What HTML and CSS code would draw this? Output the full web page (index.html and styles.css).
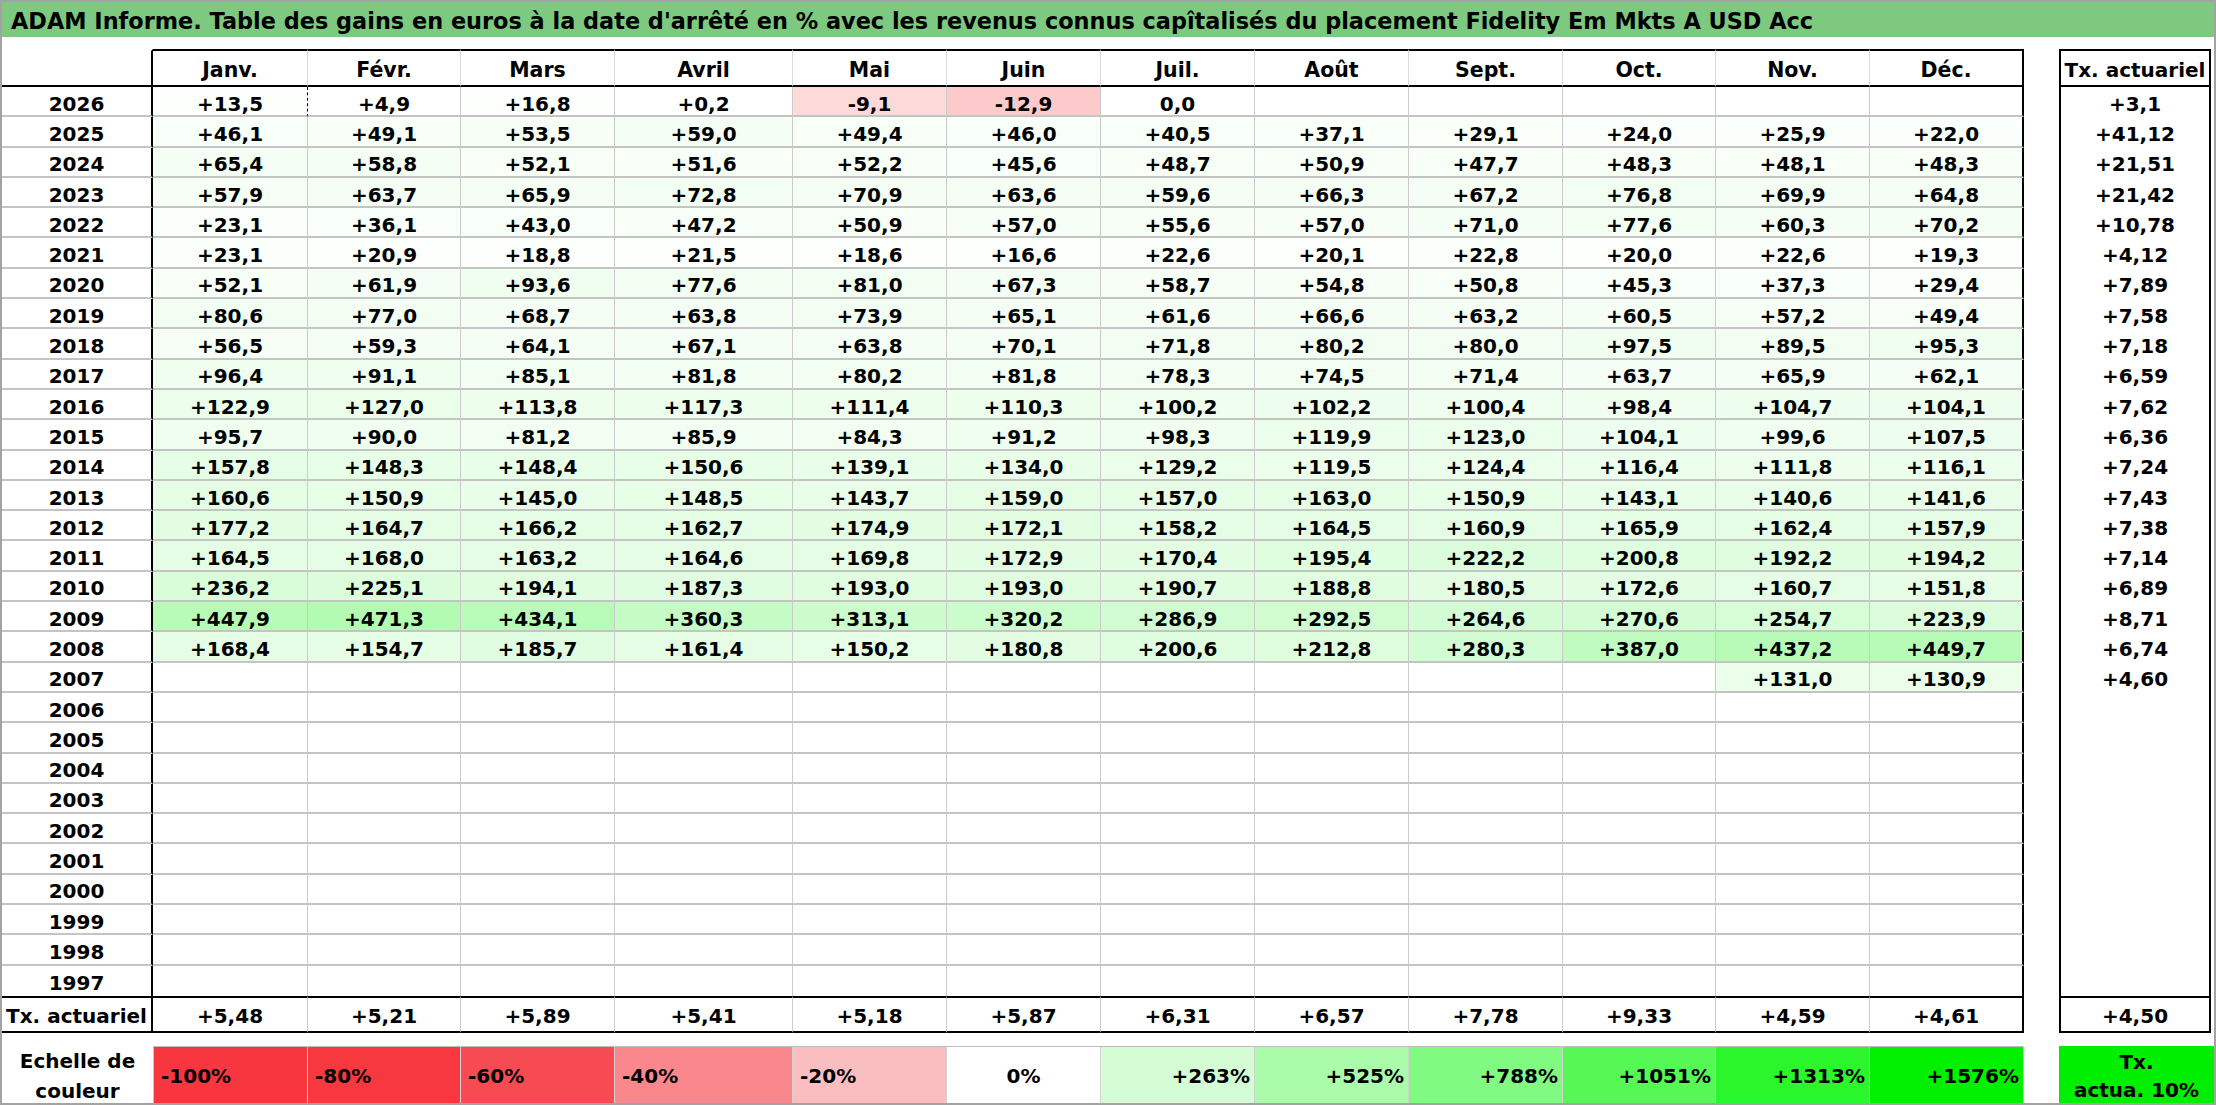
FILE: index.html
```html
<!DOCTYPE html>
<html lang="fr">
<head>
<meta charset="utf-8">
<title>ADAM Informe</title>
<link rel="stylesheet" href="styles.css">
</head>
<body>
<div class="sheet">
  <div class="title">ADAM Informe. Table des gains en euros à la date d'arrêté en % avec les revenus connus capîtalisés du placement Fidelity Em Mkts A USD Acc</div>
  <div class="layout">
    <div class="tbl">
      <div class="row head"><div></div><div>Janv.</div><div>Févr.</div><div>Mars</div><div>Avril</div><div>Mai</div><div>Juin</div><div>Juil.</div><div>Août</div><div>Sept.</div><div>Oct.</div><div>Nov.</div><div>Déc.</div></div>
      <div class="rows">
        <div class="row data"><div>2026</div><div class="c dash" style="--v:13.5">+13,5</div><div class="c" style="--v:4.9">+4,9</div><div class="c" style="--v:16.8">+16,8</div><div class="c" style="--v:0.2">+0,2</div><div class="c n1">-9,1</div><div class="c n2">-12,9</div><div class="c">0,0</div><div class="c"></div><div class="c"></div><div class="c"></div><div class="c"></div><div class="c"></div></div>
        <div class="row data"><div>2025</div><div class="c" style="--v:46.1">+46,1</div><div class="c" style="--v:49.1">+49,1</div><div class="c" style="--v:53.5">+53,5</div><div class="c" style="--v:59">+59,0</div><div class="c" style="--v:49.4">+49,4</div><div class="c" style="--v:46">+46,0</div><div class="c" style="--v:40.5">+40,5</div><div class="c" style="--v:37.1">+37,1</div><div class="c" style="--v:29.1">+29,1</div><div class="c" style="--v:24">+24,0</div><div class="c" style="--v:25.9">+25,9</div><div class="c" style="--v:22">+22,0</div></div>
        <div class="row data"><div>2024</div><div class="c" style="--v:65.4">+65,4</div><div class="c" style="--v:58.8">+58,8</div><div class="c" style="--v:52.1">+52,1</div><div class="c" style="--v:51.6">+51,6</div><div class="c" style="--v:52.2">+52,2</div><div class="c" style="--v:45.6">+45,6</div><div class="c" style="--v:48.7">+48,7</div><div class="c" style="--v:50.9">+50,9</div><div class="c" style="--v:47.7">+47,7</div><div class="c" style="--v:48.3">+48,3</div><div class="c" style="--v:48.1">+48,1</div><div class="c" style="--v:48.3">+48,3</div></div>
        <div class="row data"><div>2023</div><div class="c" style="--v:57.9">+57,9</div><div class="c" style="--v:63.7">+63,7</div><div class="c" style="--v:65.9">+65,9</div><div class="c" style="--v:72.8">+72,8</div><div class="c" style="--v:70.9">+70,9</div><div class="c" style="--v:63.6">+63,6</div><div class="c" style="--v:59.6">+59,6</div><div class="c" style="--v:66.3">+66,3</div><div class="c" style="--v:67.2">+67,2</div><div class="c" style="--v:76.8">+76,8</div><div class="c" style="--v:69.9">+69,9</div><div class="c" style="--v:64.8">+64,8</div></div>
        <div class="row data"><div>2022</div><div class="c" style="--v:23.1">+23,1</div><div class="c" style="--v:36.1">+36,1</div><div class="c" style="--v:43">+43,0</div><div class="c" style="--v:47.2">+47,2</div><div class="c" style="--v:50.9">+50,9</div><div class="c" style="--v:57">+57,0</div><div class="c" style="--v:55.6">+55,6</div><div class="c" style="--v:57">+57,0</div><div class="c" style="--v:71">+71,0</div><div class="c" style="--v:77.6">+77,6</div><div class="c" style="--v:60.3">+60,3</div><div class="c" style="--v:70.2">+70,2</div></div>
        <div class="row data"><div>2021</div><div class="c" style="--v:23.1">+23,1</div><div class="c" style="--v:20.9">+20,9</div><div class="c" style="--v:18.8">+18,8</div><div class="c" style="--v:21.5">+21,5</div><div class="c" style="--v:18.6">+18,6</div><div class="c" style="--v:16.6">+16,6</div><div class="c" style="--v:22.6">+22,6</div><div class="c" style="--v:20.1">+20,1</div><div class="c" style="--v:22.8">+22,8</div><div class="c" style="--v:20">+20,0</div><div class="c" style="--v:22.6">+22,6</div><div class="c" style="--v:19.3">+19,3</div></div>
        <div class="row data"><div>2020</div><div class="c" style="--v:52.1">+52,1</div><div class="c" style="--v:61.9">+61,9</div><div class="c" style="--v:93.6">+93,6</div><div class="c" style="--v:77.6">+77,6</div><div class="c" style="--v:81">+81,0</div><div class="c" style="--v:67.3">+67,3</div><div class="c" style="--v:58.7">+58,7</div><div class="c" style="--v:54.8">+54,8</div><div class="c" style="--v:50.8">+50,8</div><div class="c" style="--v:45.3">+45,3</div><div class="c" style="--v:37.3">+37,3</div><div class="c" style="--v:29.4">+29,4</div></div>
        <div class="row data"><div>2019</div><div class="c" style="--v:80.6">+80,6</div><div class="c" style="--v:77">+77,0</div><div class="c" style="--v:68.7">+68,7</div><div class="c" style="--v:63.8">+63,8</div><div class="c" style="--v:73.9">+73,9</div><div class="c" style="--v:65.1">+65,1</div><div class="c" style="--v:61.6">+61,6</div><div class="c" style="--v:66.6">+66,6</div><div class="c" style="--v:63.2">+63,2</div><div class="c" style="--v:60.5">+60,5</div><div class="c" style="--v:57.2">+57,2</div><div class="c" style="--v:49.4">+49,4</div></div>
        <div class="row data"><div>2018</div><div class="c" style="--v:56.5">+56,5</div><div class="c" style="--v:59.3">+59,3</div><div class="c" style="--v:64.1">+64,1</div><div class="c" style="--v:67.1">+67,1</div><div class="c" style="--v:63.8">+63,8</div><div class="c" style="--v:70.1">+70,1</div><div class="c" style="--v:71.8">+71,8</div><div class="c" style="--v:80.2">+80,2</div><div class="c" style="--v:80">+80,0</div><div class="c" style="--v:97.5">+97,5</div><div class="c" style="--v:89.5">+89,5</div><div class="c" style="--v:95.3">+95,3</div></div>
        <div class="row data"><div>2017</div><div class="c" style="--v:96.4">+96,4</div><div class="c" style="--v:91.1">+91,1</div><div class="c" style="--v:85.1">+85,1</div><div class="c" style="--v:81.8">+81,8</div><div class="c" style="--v:80.2">+80,2</div><div class="c" style="--v:81.8">+81,8</div><div class="c" style="--v:78.3">+78,3</div><div class="c" style="--v:74.5">+74,5</div><div class="c" style="--v:71.4">+71,4</div><div class="c" style="--v:63.7">+63,7</div><div class="c" style="--v:65.9">+65,9</div><div class="c" style="--v:62.1">+62,1</div></div>
        <div class="row data"><div>2016</div><div class="c" style="--v:122.9">+122,9</div><div class="c" style="--v:127">+127,0</div><div class="c" style="--v:113.8">+113,8</div><div class="c" style="--v:117.3">+117,3</div><div class="c" style="--v:111.4">+111,4</div><div class="c" style="--v:110.3">+110,3</div><div class="c" style="--v:100.2">+100,2</div><div class="c" style="--v:102.2">+102,2</div><div class="c" style="--v:100.4">+100,4</div><div class="c" style="--v:98.4">+98,4</div><div class="c" style="--v:104.7">+104,7</div><div class="c" style="--v:104.1">+104,1</div></div>
        <div class="row data"><div>2015</div><div class="c" style="--v:95.7">+95,7</div><div class="c" style="--v:90">+90,0</div><div class="c" style="--v:81.2">+81,2</div><div class="c" style="--v:85.9">+85,9</div><div class="c" style="--v:84.3">+84,3</div><div class="c" style="--v:91.2">+91,2</div><div class="c" style="--v:98.3">+98,3</div><div class="c" style="--v:119.9">+119,9</div><div class="c" style="--v:123">+123,0</div><div class="c" style="--v:104.1">+104,1</div><div class="c" style="--v:99.6">+99,6</div><div class="c" style="--v:107.5">+107,5</div></div>
        <div class="row data"><div>2014</div><div class="c" style="--v:157.8">+157,8</div><div class="c" style="--v:148.3">+148,3</div><div class="c" style="--v:148.4">+148,4</div><div class="c" style="--v:150.6">+150,6</div><div class="c" style="--v:139.1">+139,1</div><div class="c" style="--v:134">+134,0</div><div class="c" style="--v:129.2">+129,2</div><div class="c" style="--v:119.5">+119,5</div><div class="c" style="--v:124.4">+124,4</div><div class="c" style="--v:116.4">+116,4</div><div class="c" style="--v:111.8">+111,8</div><div class="c" style="--v:116.1">+116,1</div></div>
        <div class="row data"><div>2013</div><div class="c" style="--v:160.6">+160,6</div><div class="c" style="--v:150.9">+150,9</div><div class="c" style="--v:145">+145,0</div><div class="c" style="--v:148.5">+148,5</div><div class="c" style="--v:143.7">+143,7</div><div class="c" style="--v:159">+159,0</div><div class="c" style="--v:157">+157,0</div><div class="c" style="--v:163">+163,0</div><div class="c" style="--v:150.9">+150,9</div><div class="c" style="--v:143.1">+143,1</div><div class="c" style="--v:140.6">+140,6</div><div class="c" style="--v:141.6">+141,6</div></div>
        <div class="row data"><div>2012</div><div class="c" style="--v:177.2">+177,2</div><div class="c" style="--v:164.7">+164,7</div><div class="c" style="--v:166.2">+166,2</div><div class="c" style="--v:162.7">+162,7</div><div class="c" style="--v:174.9">+174,9</div><div class="c" style="--v:172.1">+172,1</div><div class="c" style="--v:158.2">+158,2</div><div class="c" style="--v:164.5">+164,5</div><div class="c" style="--v:160.9">+160,9</div><div class="c" style="--v:165.9">+165,9</div><div class="c" style="--v:162.4">+162,4</div><div class="c" style="--v:157.9">+157,9</div></div>
        <div class="row data"><div>2011</div><div class="c" style="--v:164.5">+164,5</div><div class="c" style="--v:168">+168,0</div><div class="c" style="--v:163.2">+163,2</div><div class="c" style="--v:164.6">+164,6</div><div class="c" style="--v:169.8">+169,8</div><div class="c" style="--v:172.9">+172,9</div><div class="c" style="--v:170.4">+170,4</div><div class="c" style="--v:195.4">+195,4</div><div class="c" style="--v:222.2">+222,2</div><div class="c" style="--v:200.8">+200,8</div><div class="c" style="--v:192.2">+192,2</div><div class="c" style="--v:194.2">+194,2</div></div>
        <div class="row data"><div>2010</div><div class="c" style="--v:236.2">+236,2</div><div class="c" style="--v:225.1">+225,1</div><div class="c" style="--v:194.1">+194,1</div><div class="c" style="--v:187.3">+187,3</div><div class="c" style="--v:193">+193,0</div><div class="c" style="--v:193">+193,0</div><div class="c" style="--v:190.7">+190,7</div><div class="c" style="--v:188.8">+188,8</div><div class="c" style="--v:180.5">+180,5</div><div class="c" style="--v:172.6">+172,6</div><div class="c" style="--v:160.7">+160,7</div><div class="c" style="--v:151.8">+151,8</div></div>
        <div class="row data"><div>2009</div><div class="c" style="--v:447.9">+447,9</div><div class="c" style="--v:471.3">+471,3</div><div class="c" style="--v:434.1">+434,1</div><div class="c" style="--v:360.3">+360,3</div><div class="c" style="--v:313.1">+313,1</div><div class="c" style="--v:320.2">+320,2</div><div class="c" style="--v:286.9">+286,9</div><div class="c" style="--v:292.5">+292,5</div><div class="c" style="--v:264.6">+264,6</div><div class="c" style="--v:270.6">+270,6</div><div class="c" style="--v:254.7">+254,7</div><div class="c" style="--v:223.9">+223,9</div></div>
        <div class="row data"><div>2008</div><div class="c" style="--v:168.4">+168,4</div><div class="c" style="--v:154.7">+154,7</div><div class="c" style="--v:185.7">+185,7</div><div class="c" style="--v:161.4">+161,4</div><div class="c" style="--v:150.2">+150,2</div><div class="c" style="--v:180.8">+180,8</div><div class="c" style="--v:200.6">+200,6</div><div class="c" style="--v:212.8">+212,8</div><div class="c" style="--v:280.3">+280,3</div><div class="c" style="--v:387">+387,0</div><div class="c" style="--v:437.2">+437,2</div><div class="c" style="--v:449.7">+449,7</div></div>
        <div class="row data"><div>2007</div><div class="c"></div><div class="c"></div><div class="c"></div><div class="c"></div><div class="c"></div><div class="c"></div><div class="c"></div><div class="c"></div><div class="c"></div><div class="c"></div><div class="c" style="--v:131">+131,0</div><div class="c" style="--v:130.9">+130,9</div></div>
        <div class="row data"><div>2006</div><div class="c"></div><div class="c"></div><div class="c"></div><div class="c"></div><div class="c"></div><div class="c"></div><div class="c"></div><div class="c"></div><div class="c"></div><div class="c"></div><div class="c"></div><div class="c"></div></div>
        <div class="row data"><div>2005</div><div class="c"></div><div class="c"></div><div class="c"></div><div class="c"></div><div class="c"></div><div class="c"></div><div class="c"></div><div class="c"></div><div class="c"></div><div class="c"></div><div class="c"></div><div class="c"></div></div>
        <div class="row data"><div>2004</div><div class="c"></div><div class="c"></div><div class="c"></div><div class="c"></div><div class="c"></div><div class="c"></div><div class="c"></div><div class="c"></div><div class="c"></div><div class="c"></div><div class="c"></div><div class="c"></div></div>
        <div class="row data"><div>2003</div><div class="c"></div><div class="c"></div><div class="c"></div><div class="c"></div><div class="c"></div><div class="c"></div><div class="c"></div><div class="c"></div><div class="c"></div><div class="c"></div><div class="c"></div><div class="c"></div></div>
        <div class="row data"><div>2002</div><div class="c"></div><div class="c"></div><div class="c"></div><div class="c"></div><div class="c"></div><div class="c"></div><div class="c"></div><div class="c"></div><div class="c"></div><div class="c"></div><div class="c"></div><div class="c"></div></div>
        <div class="row data"><div>2001</div><div class="c"></div><div class="c"></div><div class="c"></div><div class="c"></div><div class="c"></div><div class="c"></div><div class="c"></div><div class="c"></div><div class="c"></div><div class="c"></div><div class="c"></div><div class="c"></div></div>
        <div class="row data"><div>2000</div><div class="c"></div><div class="c"></div><div class="c"></div><div class="c"></div><div class="c"></div><div class="c"></div><div class="c"></div><div class="c"></div><div class="c"></div><div class="c"></div><div class="c"></div><div class="c"></div></div>
        <div class="row data"><div>1999</div><div class="c"></div><div class="c"></div><div class="c"></div><div class="c"></div><div class="c"></div><div class="c"></div><div class="c"></div><div class="c"></div><div class="c"></div><div class="c"></div><div class="c"></div><div class="c"></div></div>
        <div class="row data"><div>1998</div><div class="c"></div><div class="c"></div><div class="c"></div><div class="c"></div><div class="c"></div><div class="c"></div><div class="c"></div><div class="c"></div><div class="c"></div><div class="c"></div><div class="c"></div><div class="c"></div></div>
        <div class="row data"><div>1997</div><div class="c"></div><div class="c"></div><div class="c"></div><div class="c"></div><div class="c"></div><div class="c"></div><div class="c"></div><div class="c"></div><div class="c"></div><div class="c"></div><div class="c"></div><div class="c"></div></div>
      </div>
      <div class="row foot"><div>Tx. actuariel</div><div>+5,48</div><div>+5,21</div><div>+5,89</div><div>+5,41</div><div>+5,18</div><div>+5,87</div><div>+6,31</div><div>+6,57</div><div>+7,78</div><div>+9,33</div><div>+4,59</div><div>+4,61</div></div>
    </div>
    <div class="side">
      <div class="sh">Tx. actuariel</div>
      <div class="sv">+3,1</div>
      <div class="sv">+41,12</div>
      <div class="sv">+21,51</div>
      <div class="sv">+21,42</div>
      <div class="sv">+10,78</div>
      <div class="sv">+4,12</div>
      <div class="sv">+7,89</div>
      <div class="sv">+7,58</div>
      <div class="sv">+7,18</div>
      <div class="sv">+6,59</div>
      <div class="sv">+7,62</div>
      <div class="sv">+6,36</div>
      <div class="sv">+7,24</div>
      <div class="sv">+7,43</div>
      <div class="sv">+7,38</div>
      <div class="sv">+7,14</div>
      <div class="sv">+6,89</div>
      <div class="sv">+8,71</div>
      <div class="sv">+6,74</div>
      <div class="sv">+4,60</div>
      <div class="sv"></div>
      <div class="sv"></div>
      <div class="sv"></div>
      <div class="sv"></div>
      <div class="sv"></div>
      <div class="sv"></div>
      <div class="sv"></div>
      <div class="sv"></div>
      <div class="sv"></div>
      <div class="sv"></div>
      <div class="sf">+4,50</div>
    </div>
  </div>
  <div class="scale">
    <div class="lab">Echelle de<br>couleur</div>
    <div class="sc l r100">-100%</div>
    <div class="sc l r80">-80%</div>
    <div class="sc l r60">-60%</div>
    <div class="sc l r40">-40%</div>
    <div class="sc l r20">-20%</div>
    <div class="sc m">0%</div>
    <div class="sc r g1">+263%</div>
    <div class="sc r g2">+525%</div>
    <div class="sc r g3">+788%</div>
    <div class="sc r g4">+1051%</div>
    <div class="sc r g5">+1313%</div>
    <div class="sc r g6">+1576%</div>
    <div class="gap"></div>
    <div class="sc m gtx">Tx.<br>actua. 10%</div>
  </div>
</div>
</body>
</html>
```
FILE: styles.css
```css
:root {
  --cols: 151px 155px 153px 154px 178px 154px 154px 154px 154px 154px 153px 154px 154px;
}
html, body {
  margin: 0;
  background: #ffffff;
}
body {
  font-family: "DejaVu Sans", "Liberation Sans", sans-serif;
  font-weight: bold;
  color: #000;
}
.sheet {
  width: 2216px;
  height: 1105px;
  box-sizing: border-box;
  border: 2px solid #a3a3a3;
  overflow: hidden;
}
.title {
  height: 35px;
  box-sizing: border-box;
  background: #7dc97f;
  font-size: 22.4px;
  padding: 3px 0 0 9px;
  display: flex;
  align-items: center;
  white-space: nowrap;
}
.layout {
  display: flex;
  align-items: flex-start;
  margin-top: 12px;
}
.tbl {
  display: flex;
  flex-direction: column;
}
.row {
  display: grid;
  grid-template-columns: var(--cols);
  grid-template-rows: 100%;
  overflow: hidden;
}
.row > div {
  box-sizing: border-box;
  display: flex;
  align-items: center;
  justify-content: center;
  font-size: 20px;
  line-height: 20px;
  white-space: nowrap;
  min-height: 0;
}
.head { height: 38px; }
.head > div {
  border-top: 2px solid #000;
  border-bottom: 2px solid #000;
  border-right: 1px solid #dadada;
  padding-top: 3px;
  font-size: 20.5px;
}
.head > div:first-child {
  border-top-color: #fff;
  border-right: 2px solid #000;
}
.head > div:last-child { border-right: 2px solid #000; }

.data { height: 30.3px; }
.data > div {
  border-bottom: 2px solid #c4c4c4;
  border-right: 1px solid #cbcbcb;
  padding-top: 5px;
}
.data > div:first-child { border-right: 2px solid #000; }
.data > div:last-child { border-right: 2px solid #000; }
.rows > .data:last-child > div { border-bottom: 0; }

.c {
  --v: 0;
  background: rgb(calc(255 - var(--v) * 0.1618) calc(255 - var(--v) * 0.0095) calc(255 - var(--v) * 0.1618));
}
.data > .dash { border-right: 1px dashed #000; }
.c.n1 { background: #fdd9d9; }
.c.n2 { background: #fccaca; }

.foot { height: 37px; }
.foot > div {
  border-top: 2px solid #000;
  border-bottom: 2px solid #000;
  border-right: 1px solid #cbcbcb;
  padding-top: 3px;
}
.foot > div:first-child, .foot > div:last-child { border-right: 2px solid #000; }

.side {
  margin-left: 35px;
  width: 152px;
  box-sizing: border-box;
  border-left: 2px solid #000;
  border-right: 2px solid #000;
  display: flex;
  flex-direction: column;
}
.side > div {
  box-sizing: border-box;
  display: flex;
  align-items: center;
  justify-content: center;
  font-size: 20px;
  line-height: 20px;
  white-space: nowrap;
  flex: none;
}
.side .sh {
  height: 38px;
  border-top: 2px solid #000;
  border-bottom: 2px solid #000;
  padding-top: 3px;
}
.side .sv {
  height: 30.3px;
  padding-top: 3px;
}
.side .sf {
  height: 37px;
  border-top: 2px solid #000;
  border-bottom: 2px solid #000;
  padding-top: 3px;
}

.scale {
  display: grid;
  grid-template-columns: var(--cols) 35px 155px;
  height: 57px;
  margin-top: 13px;
}
.scale > div {
  box-sizing: border-box;
  display: flex;
  align-items: center;
  font-size: 20px;
  white-space: nowrap;
}
.scale .lab {
  justify-content: center;
  text-align: center;
  font-size: 20px;
  line-height: 30px;
}
.scale .sc {
  border-top: 1px solid #bdbdbd;
  border-right: 1px solid #d2d2d2;
}
.scale .lab + .sc { border-left: 1px solid #c4c4c4; }
.scale .l { justify-content: flex-start; padding-left: 7px; }
.scale .r { justify-content: flex-end; padding-right: 4px; }
.scale .m { justify-content: center; text-align: center; }
.r100 { background: #f7363f; }
.r80 { background: #f8383f; }
.r60 { background: #f74b53; }
.r40 { background: #f9878b; }
.r20 { background: #fbbec0; }
.g1 { background: #d5fdd5; }
.g2 { background: #aafbaa; }
.g3 { background: #80fa80; }
.g4 { background: #55f855; }
.g5 { background: #2bf52b; }
.g6 { background: #00f000; }
.scale .gtx {
  background: #00ee00;
  line-height: 28px;
  border: 0;
}
```
